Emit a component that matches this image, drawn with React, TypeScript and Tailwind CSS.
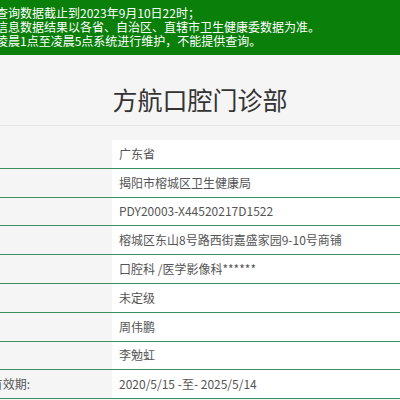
import React from "react";

const rows: { label: string; value: string }[] = [
  { label: "所在省份:", value: "广东省" },
  { label: "登记机关:", value: "揭阳市榕城区卫生健康局" },
  { label: "登记号:", value: "PDY20003-X44520217D1522" },
  { label: "地址:", value: "榕城区东山8号路西街嘉盛家园9-10号商铺" },
  { label: "诊疗科目:", value: "口腔科 /医学影像科******" },
  { label: "医院等级:", value: "未定级" },
  { label: "法定代表人:", value: "周伟鹏" },
  { label: "主要负责人:", value: "李勉虹" },
  { label: "执业许可证有效期:", value: "2020/5/15 -至- 2025/5/14" },
];

export default function App() {
  const font = { fontFamily: '"Noto Sans CJK SC", "Noto Sans", sans-serif' };
  return (
    <div className="w-[400px] h-[400px] overflow-hidden bg-[#f5f5f5]" style={font}>
      <div className="bg-[#0a800a] text-white text-[12px] leading-[14px] pt-[6px] pb-[6px] h-[55px] ml-[-4px] whitespace-nowrap">
        <div>查询数据截止到2023年9月10日22时；</div>
        <div>信息数据结果以各省、自治区、直辖市卫生健康委数据为准。</div>
        <div>凌晨1点至凌晨5点系统进行维护，不能提供查询。</div>
      </div>
      <div className="h-[71px] border-b border-[#e6e6e6] flex justify-center pt-[29px]">
        <div className="text-[25px] leading-[30px] text-[#333]">方航口腔门诊部</div>
      </div>
      <div className="mt-[14px]">
        {rows.map((r, i) => (
          <div key={i} className="flex h-[28.8px] border-b border-[#3a8f5f] box-border">
            <div className="w-[112px] bg-[#f5f5f5] text-[12px] text-[#555] flex items-center justify-end whitespace-nowrap overflow-hidden">
              {i === 8 ? <span className="mr-[82px]">{r.label}</span> : null}
            </div>
            <div className="flex-1 bg-white text-[12px] text-[#555] flex items-center pl-[7px] whitespace-nowrap">
              {r.value}
            </div>
          </div>
        ))}
      </div>
    </div>
  );
}
